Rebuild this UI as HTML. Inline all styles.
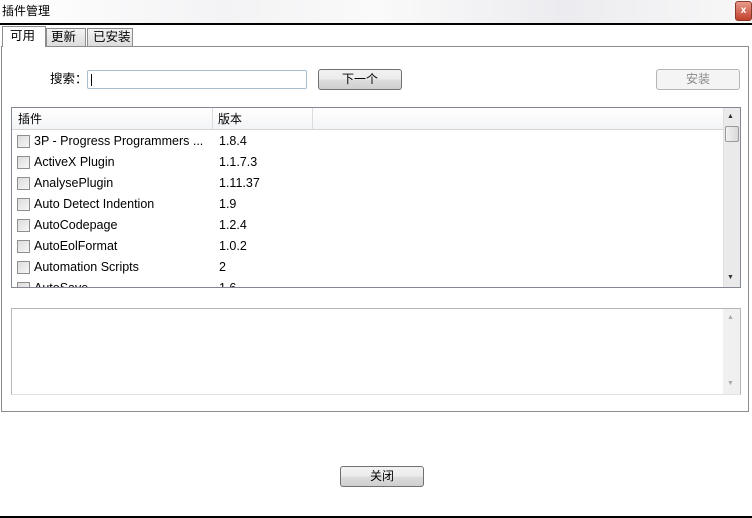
<!DOCTYPE html>
<html><head><meta charset="utf-8"><style>
*{box-sizing:border-box;margin:0;padding:0}
body{width:752px;height:518px;background:#fff;position:relative;overflow:hidden;font-family:"Liberation Sans","Noto Sans CJK SC",sans-serif;font-size:12px;color:#000}
.abs{position:absolute}
.btn{position:absolute;border:1px solid #707070;border-radius:3px;background:linear-gradient(#f2f2f2 0%,#ebebeb 50%,#dddddd 51%,#cfcfcf 100%);text-align:center;line-height:19px;font-size:12px}
.row{position:absolute;left:0;height:21px;width:712px;font-size:12.5px;line-height:21px}
.cb{position:absolute;left:5px;top:4px;width:13px;height:13px;border:1px solid #8f8f8f;background:linear-gradient(135deg,#dcdcdc,#f6f6f6)}
.nm{position:absolute;left:22px}
.vr{position:absolute;left:207px}
.tab{line-height:16px;font-size:12.5px}
</style></head><body>
<div class="abs" style="left:0;top:0;width:752px;height:23px;background:linear-gradient(90deg,#fff 0%,#f3f3f5 30%,#fafafa 50%,#ececf0 75%,#f8f8f8 100%)"></div>
<div class="abs" style="left:2px;top:3px;font-size:12px;line-height:16px">插件管理</div>
<div class="abs" style="left:735px;top:1px;width:17px;height:20px;background:linear-gradient(#e89a8a,#c0412c);border:1px solid #8a3a2a;border-radius:3px;color:#fff;font-size:10px;text-align:center;line-height:18px;font-weight:bold">x</div>
<div class="abs" style="left:0;top:23px;width:752px;height:2px;background:#000"></div>
<div class="abs" style="left:1px;top:46px;width:748px;height:366px;border:1px solid #8c8c8c;background:#fff"></div>
<div class="abs tab" style="left:2px;top:26px;width:44px;height:21px;border:1px solid #8c8c8c;border-bottom:none;background:#fff;padding:1px 0 0 7px">可用</div>
<div class="abs tab" style="left:46px;top:28px;width:40px;height:18px;border:1px solid #8c8c8c;border-bottom:none;background:linear-gradient(#f4f4f4,#dcdcdc);padding:0 0 0 4px">更新</div>
<div class="abs tab" style="left:87px;top:28px;width:46px;height:18px;border:1px solid #8c8c8c;border-bottom:none;background:linear-gradient(#f4f4f4,#dcdcdc);padding:0 0 0 5px">已安装</div>
<div class="abs" style="left:50px;top:71px;font-size:12.5px;line-height:16px">搜索：</div>
<div class="abs" style="left:87px;top:70px;width:220px;height:19px;border:1px solid #a9bdd0;border-radius:2px;background:#fff"><div class="abs" style="left:3px;top:3px;width:1px;height:12px;background:#000"></div></div>
<div class="btn" style="left:318px;top:69px;width:84px;height:21px">下一个</div>
<div class="btn" style="left:656px;top:69px;width:84px;height:21px;border-color:#b5b5b5;background:#f4f4f4;color:#8a8a8a">安装</div>
<div class="abs" style="left:11px;top:107px;width:730px;height:181px;border:1px solid #828790;background:#fff;overflow:hidden">
 <div class="abs" style="left:0;top:0;width:712px;height:22px;background:linear-gradient(#fff,#f3f4f6);border-bottom:1px solid #d5d5d5"></div>
 <div class="abs" style="left:200px;top:0;width:1px;height:22px;background:#dcdcdc"></div>
 <div class="abs" style="left:300px;top:0;width:1px;height:22px;background:#dcdcdc"></div>
 <div class="abs" style="left:6px;top:3px;font-size:12px;line-height:16px">插件</div>
 <div class="abs" style="left:206px;top:3px;font-size:12px;line-height:16px">版本</div>
 <div class="row" style="top:23px"><div class="cb"></div><span class="nm">3P - Progress Programmers ...</span><span class="vr">1.8.4</span></div>
 <div class="row" style="top:44px"><div class="cb"></div><span class="nm">ActiveX Plugin</span><span class="vr">1.1.7.3</span></div>
 <div class="row" style="top:65px"><div class="cb"></div><span class="nm">AnalysePlugin</span><span class="vr">1.11.37</span></div>
 <div class="row" style="top:86px"><div class="cb"></div><span class="nm">Auto Detect Indention</span><span class="vr">1.9</span></div>
 <div class="row" style="top:107px"><div class="cb"></div><span class="nm">AutoCodepage</span><span class="vr">1.2.4</span></div>
 <div class="row" style="top:128px"><div class="cb"></div><span class="nm">AutoEolFormat</span><span class="vr">1.0.2</span></div>
 <div class="row" style="top:149px"><div class="cb"></div><span class="nm">Automation Scripts</span><span class="vr">2</span></div>
 <div class="row" style="top:170px"><div class="cb"></div><span class="nm">AutoSave</span><span class="vr">1.6</span></div>
 <div class="abs" style="left:711px;top:0;width:17px;height:179px;background:#eaeaea;border-left:1px solid #e0e0e0"></div>
 <div class="abs" style="left:715px;top:5px;font-size:7px;color:#333">▲</div>
 <div class="abs" style="left:713px;top:18px;width:14px;height:16px;border:1px solid #9a9a9a;border-radius:2px;background:linear-gradient(90deg,#f2f2f2,#d8d8d8)"></div>
 <div class="abs" style="left:715px;top:166px;font-size:7px;color:#333">▼</div>
</div>
<div class="abs" style="left:11px;top:308px;width:730px;height:87px;border:1px solid #b5b5b5;border-bottom-color:#e0e0e0;background:#fff">
 <div class="abs" style="left:711px;top:0;width:17px;height:85px;background:#f0f0f0"></div>
 <div class="abs" style="left:715px;top:5px;font-size:7px;color:#aaa">▲</div>
 <div class="abs" style="left:715px;top:71px;font-size:7px;color:#aaa">▼</div>
</div>
<div class="btn" style="left:340px;top:466px;width:84px;height:21px">关闭</div>
<div class="abs" style="left:0;top:516px;width:752px;height:2px;background:#000"></div>
</body></html>
